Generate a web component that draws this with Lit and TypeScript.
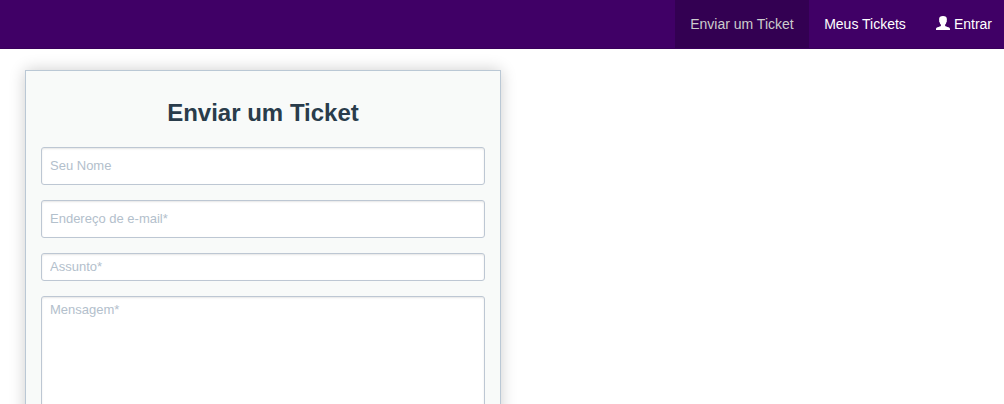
import { LitElement, html, css } from "lit";
import { customElement } from "lit/decorators.js";

@customElement("ticket-nav")
class TicketNav extends LitElement {
  static styles = css`
    :host {
      display: block;
    }
    .bar {
      box-sizing: border-box;
      height: 49px;
      display: flex;
      justify-content: flex-end;
      padding-right: 12px;
      background: #400066;
      border-bottom: 1px solid #3a005c;
      font: 14px/20px "Liberation Sans", Arial, sans-serif;
    }
    .link {
      display: flex;
      gap: 4px;
      padding: 14px 15px;
      color: #fff;
      text-decoration: none;
      white-space: nowrap;
    }
    .link:last-child {
      padding-right: 0;
    }
    .active {
      padding-right: 15.5px;
      background: #330052;
      color: #ccc;
    }
    .icon {
      width: 14px;
      height: 14px;
      margin-top: 2px;
      fill: currentColor;
    }
  `;

  render() {
    return html`
      <nav class="bar">
        <a class="link active" href="#">Enviar um Ticket</a>
        <a class="link" href="#">Meus Tickets</a>
        <a class="link" href="#">
          <svg class="icon" viewBox="0 0 14 14" aria-hidden="true">
            <path
              d="M7 0C9.6 0 10.9 1.2 10.9 3.2C10.9 3.8 10.8 4.2 10.7 4.6C11.1 4.9 10.9 5.9 10.4 6.3C10.2 7.4 9.7 8.1 9.1 8.7V9.7C9.3 10.4 11.2 10.8 12.4 11.2C13.5 11.6 14 12.1 14 12.9V14H0V12.9C0 12.1 .5 11.6 1.6 11.2C2.8 10.8 4.7 10.4 4.9 9.7V8.7C4.3 8.1 3.8 7.4 3.6 6.3C3.1 5.9 2.9 4.9 3.3 4.6C3.2 4.2 3.1 3.8 3.1 3.2C3.1 1.2 4.4 0 7 0Z"
            />
          </svg>
          <span>Entrar</span>
        </a>
      </nav>
    `;
  }
}

@customElement("ticket-form")
class TicketForm extends LitElement {
  static styles = css`
    :host {
      display: block;
    }
    .card {
      box-sizing: border-box;
      width: 476px;
      height: 560px;
      display: flex;
      flex-direction: column;
      gap: 15px;
      padding: 25px 15px 15px;
      background: #f8faf9;
      border: 1px solid #bac8d5;
      box-shadow: 0 0 15px rgba(0, 0, 0, 0.2);
      font-family: "Liberation Sans", Arial, sans-serif;
    }
    .title {
      margin: 0;
      color: #293c4b;
      font-size: 24px;
      line-height: 34px;
      font-weight: bold;
      text-align: center;
      margin-bottom: 2px;
    }
    .field {
      box-sizing: border-box;
      display: block;
      width: 100%;
      height: 38px;
      margin: 0;
      padding: 3px 8px 5px;
      background: #fff;
      border: 1px solid #bdc7d3;
      border-radius: 3px;
      box-shadow: inset 0 1px 2px rgba(0, 0, 0, 0.1);
      color: #293c4b;
      font: 13px/18px "Liberation Sans", Arial, sans-serif;
      resize: none;
      outline: none;
    }
    .field::placeholder {
      color: #b3c0cc;
      opacity: 1;
    }
    .short {
      height: 28px;
    }
    .message {
      flex: 1;
      padding: 4px 8px;
    }
  `;

  render() {
    return html`
      <form class="card">
        <h1 class="title">Enviar um Ticket</h1>
        <input class="field" type="text" placeholder="Seu Nome" />
        <input class="field" type="email" placeholder="Endereço de e-mail*" />
        <input class="field short" type="text" placeholder="Assunto*" />
        <textarea class="field message" placeholder="Mensagem*"></textarea>
      </form>
    `;
  }
}

@customElement("app-root")
class AppRoot extends LitElement {
  static styles = css`
    :host {
      display: block;
      height: 404px;
      overflow: hidden;
      background: #fff;
    }
    .content {
      padding: 21px 25px 0;
    }
  `;

  render() {
    return html`
      <ticket-nav></ticket-nav>
      <main class="content"><ticket-form></ticket-form></main>
    `;
  }
}
